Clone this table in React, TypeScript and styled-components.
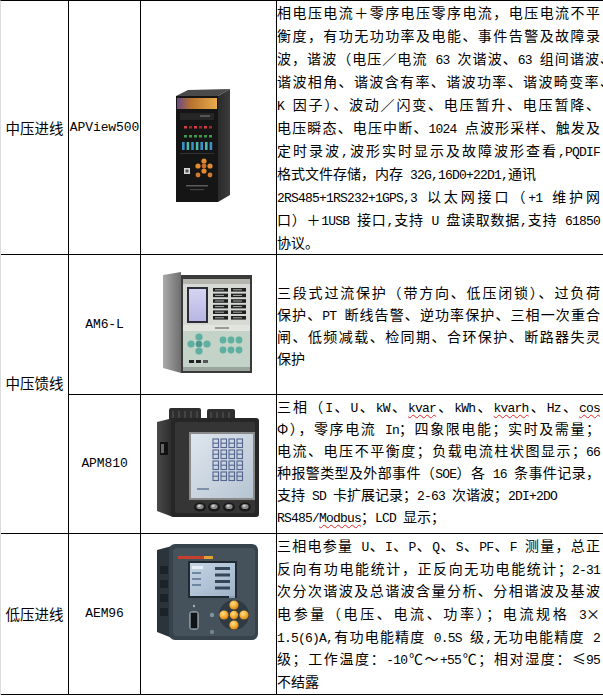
import React from "react";
import styled, { createGlobalStyle } from "styled-components";

const Global = createGlobalStyle`
  html, body { margin: 0; padding: 0; background: #fff; overflow: hidden; }
  body { font-family: "Noto Sans CJK SC", sans-serif; color: #000; }
  #root { width: 603px; height: 697px; overflow: hidden; }
`;

const Sheet = styled.div`
  display: grid;
  grid-template-columns: 68px 72px 136px 330px;
  grid-template-rows: 254px 140px 139px 161px;
  width: 607px;
  border-top: 1px solid #000;
  border-left: 1px solid #dcdcdc;
`;

const Cell = styled.div<{ $row: string; $col: number }>`
  grid-row: ${(p) => p.$row};
  grid-column: ${(p) => p.$col};
  box-sizing: border-box;
  border-right: 1px solid #000;
  border-bottom: 1px solid #000;
  min-width: 0;
  min-height: 0;
`;

const Category = styled(Cell)<{ $lift?: number }>`
  display: flex;
  align-items: center;
  justify-content: center;
  padding-bottom: ${(p) => p.$lift ?? 0}px;
  font-family: "Noto Sans CJK SC", sans-serif;
  font-size: 14.5px;
  line-height: 20px;
  white-space: nowrap;
`;

const Model = styled(Cell)`
  display: flex;
  align-items: center;
  justify-content: center;
  font-family: "Liberation Mono", monospace;
  font-size: 13px;
  letter-spacing: -0.1px;
  line-height: 18px;
  white-space: nowrap;
`;

const Picture = styled(Cell)<{ $pt: number; $pl: number }>`
  display: flex;
  align-items: flex-start;
  justify-content: flex-start;
  padding: ${(p) => p.$pt}px 0 0 ${(p) => p.$pl}px;
  svg { display: block; }
`;

const Desc = styled(Cell)<{ $center?: boolean }>`
  display: flex;
  flex-direction: column;
  justify-content: ${(p) => (p.$center ? "center" : "flex-start")};
  padding: 0 6px 0 0;
  font-family: "Noto Sans CJK SC", sans-serif;
  font-size: 14px;
`;

const Line = styled.div<{ $fill?: boolean; $lh: number }>`
  height: ${(p) => p.$lh}px;
  line-height: ${(p) => p.$lh}px;
  flex: none;
  text-align: justify;
  text-align-last: ${(p) => (p.$fill ? "justify" : "left")};
  text-justify: inter-character;
  white-space: normal;
`;

const Latin = styled.span`
  font-family: "Liberation Mono", monospace;
  font-size: 13px;
  line-height: 1;
  letter-spacing: -0.8px;
`;

const Flag = styled.span`
  text-decoration: underline wavy #e02828;
  text-decoration-thickness: 1px;
  text-underline-offset: 2px;
`;

const Hang = styled.span`
  display: inline-block;
  width: 0;
  line-height: 1;
  white-space: nowrap;
  overflow: visible;
`;

const FLAGGED = /(kvarh|kvar|cos|Modbus)/;

function Rich({ text }: { text: string }) {
  const parts = text.split(/([\x20-\x7E]+)/);
  return (
    <>
      {parts.map((p, i) => {
        if (!p) return null;
        if (/^[\x20-\x7E]+$/.test(p)) {
          const sub = p.split(FLAGGED);
          return (
            <Latin key={i}>
              {sub.map((s, j) =>
                s && FLAGGED.test(s) ? <Flag key={j}>{s}</Flag> : s
              )}
            </Latin>
          );
        }
        return <React.Fragment key={i}>{p}</React.Fragment>;
      })}
    </>
  );
}

type L = { t: string; f?: boolean; h?: string };

function Lines({ lines, lh }: { lines: L[]; lh: number }) {
  return (
    <>
      {lines.map((l, i) => (
        <Line key={i} $fill={l.f} $lh={lh}>
          <Rich text={l.t} />
          {l.h ? <Hang>{l.h}</Hang> : null}
        </Line>
      ))}
    </>
  );
}

const row1: L[] = [
  { t: "相电压电流＋零序电压零序电流，电压电流不平", f: true },
  { t: "衡度，有功无功功率及电能、事件告警及故障录", f: true },
  { t: "波，谐波（电压／电流 63 次谐波、63 组间谐波", f: true, h: "、" },
  { t: "谐波相角、谐波含有率、谐波功率、谐波畸变率", f: true, h: "、" },
  { t: "K 因子）、波动／闪变、电压暂升、电压暂降、", f: true },
  { t: "电压瞬态、电压中断、1024 点波形采样、触发及", f: true },
  { t: "定时录波,波形实时显示及故障波形查看,PQDIF", f: true },
  { t: "格式文件存储，内存 32G,16D0+22D1,通讯" },
  { t: "2RS485+1RS232+1GPS,3 以太网接口（+1 维护网", f: true },
  { t: "口）＋1USB 接口,支持 U 盘读取数据,支持 61850", f: true },
  { t: "协议。" },
];

const row2: L[] = [
  { t: "三段式过流保护（带方向、低压闭锁）、过负荷", f: true },
  { t: "保护、PT 断线告警、逆功率保护、三相一次重合", f: true },
  { t: "闸、低频减载、检同期、合环保护、断路器失灵", f: true },
  { t: "保护" },
];

const row3: L[] = [
  { t: "三相（I、U、kW、kvar、kWh、kvarh、Hz、cos", f: true },
  { t: "Φ），零序电流 In；四象限电能；实时及需量；", f: true },
  { t: "电流、电压不平衡度；负载电流柱状图显示；66", f: true },
  { t: "种报警类型及外部事件（SOE）各 16 条事件记录，", f: true },
  { t: "支持 SD 卡扩展记录；2-63 次谐波；2DI+2DO" },
  { t: "RS485/Modbus；LCD 显示；" },
];

const row4: L[] = [
  { t: "三相电参量 U、I、P、Q、S、PF、F 测量，总正", f: true },
  { t: "反向有功电能统计，正反向无功电能统计；2-31", f: true },
  { t: "次分次谐波及总谐波含量分析、分相谐波及基波", f: true },
  { t: "电参量（电压、电流、功率）；电流规格 3×", f: true },
  { t: "1.5(6)A,有功电能精度 0.5S 级,无功电能精度 2", f: true },
  { t: "级；工作温度：-10℃～+55℃；相对湿度：≤95", f: true },
  { t: "不结露" },
];

const ApviewDevice = () => (
  <svg width="54" height="113" viewBox="0 0 54 113">
    <defs>
      <linearGradient id="apvBand" x1="0" y1="0" x2="1" y2="0">
        <stop offset="0" stopColor="#6a4a86" />
        <stop offset="0.35" stopColor="#b8732e" />
        <stop offset="1" stopColor="#e9ac4c" />
      </linearGradient>
      <linearGradient id="apvSide" x1="0" y1="0" x2="1" y2="0">
        <stop offset="0" stopColor="#2a2a2a" />
        <stop offset="1" stopColor="#3c3c3c" />
      </linearGradient>
    </defs>
    <polygon points="42,7 54,0 54,106 42,113" fill="url(#apvSide)" />
    <polygon points="0,7 12,1 54,0 42,7" fill="#4a4a4a" />
    <rect x="0" y="7" width="42" height="106" fill="#151515" />
    <rect x="1" y="9" width="40" height="11" fill="url(#apvBand)" />
    <rect x="4" y="24" width="34" height="7" fill="#262626" />
    <rect x="24" y="26" width="10" height="2" fill="#555" />
    {[0, 1, 2, 3, 4, 5].map((i) => (
      <rect key={"r" + i} x={8 + i * 5} y={37} width="3" height="2.5" fill={i % 2 ? "#a02828" : "#d04040"} />
    ))}
    {[0, 1, 2, 3, 4, 5].map((i) => (
      <rect key={"g" + i} x={8 + i * 5} y={46} width="3" height="2.5" fill="#3f9a4c" />
    ))}
    {[0, 1, 2, 3, 4, 5, 6].map((i) => (
      <rect key={"c" + i} x={6 + i * 4.6} y={53} width="2.6" height="8" fill={i % 2 ? "#4fb8a8" : "#3a90c8"} />
    ))}
    <rect x="4" y="64" width="34" height="1" fill="#333" />
    <circle cx="28" cy="72" r="2.6" fill="#e48a32" />
    <circle cx="22" cy="77" r="2.6" fill="#e48a32" />
    <circle cx="34" cy="77" r="2.6" fill="#e48a32" />
    <circle cx="28" cy="77" r="2.4" fill="#c8702a" />
    <circle cx="28" cy="82" r="2.6" fill="#e48a32" />
    <circle cx="22" cy="86" r="2.4" fill="#d07a2e" />
    <circle cx="34" cy="86" r="2.4" fill="#d07a2e" />
    <rect x="8" y="79" width="6" height="6" fill="#d8d8d8" />
    <rect x="9.5" y="80.5" width="3" height="3" fill="#555" />
    <rect x="10" y="96" width="22" height="1.5" fill="#5a5a5a" />
    <rect x="14" y="100" width="14" height="1.2" fill="#444" />
  </svg>
);

const Am6Device = () => (
  <svg width="89" height="101" viewBox="0 0 89 101">
    <defs>
      <linearGradient id="amSide" x1="0" y1="0" x2="1" y2="0">
        <stop offset="0" stopColor="#a9a9a9" />
        <stop offset="1" stopColor="#6e6e6e" />
      </linearGradient>
      <linearGradient id="amLcd" x1="0" y1="0" x2="0" y2="1">
        <stop offset="0" stopColor="#d6d4f2" />
        <stop offset="1" stopColor="#b8b6e4" />
      </linearGradient>
    </defs>
    <polygon points="0,3 18,0 18,101 0,96" fill="url(#amSide)" />
    <rect x="18" y="3" width="71" height="98" fill="#3a3a3a" />
    <rect x="20" y="7" width="67" height="92" fill="#d6d9d4" />
    <rect x="20" y="7" width="67" height="5" fill="#b4b6ae" />
    <rect x="24" y="15" width="21" height="36" fill="#2c2c36" />
    <rect x="26" y="17" width="17" height="32" fill="url(#amLcd)" />
    {[0, 1, 2, 3, 4, 5].map((i) => (
      <g key={i}>
        <rect x="50" y={16 + i * 5.6} width="15" height="3.6" fill="#202020" />
        <rect x="68" y={16 + i * 5.6} width="15" height="3.6" fill="#202020" />
        <rect x="52" y={17.3 + i * 5.6} width="9" height="1" fill="#aaa" />
        <rect x="70" y={17.3 + i * 5.6} width="9" height="1" fill="#aaa" />
      </g>
    ))}
    <rect x="20" y="53" width="67" height="6" fill="#e2e4de" />
    <rect x="52" y="55" width="14" height="2" fill="#999" />
    <rect x="20" y="59" width="67" height="40" fill="#c3d3c7" />
    <circle cx="36" cy="65" r="3.6" fill="#5db0a2" />
    <circle cx="28" cy="72" r="3.6" fill="#5db0a2" />
    <circle cx="44" cy="72" r="3.6" fill="#5db0a2" />
    <circle cx="36" cy="72" r="3.3" fill="#4a9c8f" />
    <circle cx="36" cy="79" r="3.6" fill="#5db0a2" />
    {[0, 1, 2].map((i) => (
      <g key={i}>
        <circle cx={60 + i * 8} cy="68" r="3.4" fill="#5db0a2" />
        <circle cx={60 + i * 8} cy="78" r="3.4" fill="#5db0a2" />
      </g>
    ))}
    <rect x="26" y="88" width="5" height="3" fill="#222" />
    <rect x="33" y="88" width="5" height="3" fill="#222" />
    <rect x="40" y="88" width="5" height="3" fill="#555" />
    <rect x="20" y="95" width="67" height="4" fill="#9aa69d" />
  </svg>
);

const DIGIT_ROWS = [0, 1, 2, 3];
const DIGIT_COLS = [0, 1, 2, 3];

const Apm810Device = () => (
  <svg width="102" height="109" viewBox="0 0 102 109">
    <defs>
      <linearGradient id="apmLcd" x1="0" y1="0" x2="1" y2="1">
        <stop offset="0" stopColor="#dfe6ee" />
        <stop offset="1" stopColor="#b6c4d2" />
      </linearGradient>
      <linearGradient id="apmSide" x1="0" y1="0" x2="1" y2="0">
        <stop offset="0" stopColor="#4a4a4a" />
        <stop offset="1" stopColor="#2a2a2a" />
      </linearGradient>
    </defs>
    <rect x="12" y="0" width="32" height="13" rx="2" fill="#2e2e2e" />
    <rect x="50" y="1" width="28" height="12" rx="2" fill="#2e2e2e" />
    {[0, 1, 2, 3, 4].map((i) => (
      <rect key={i} x={15 + i * 6} y="3" width="2" height="8" fill="#444" />
    ))}
    {[0, 1, 2, 3].map((i) => (
      <rect key={i} x={53 + i * 6} y="4" width="2" height="7" fill="#444" />
    ))}
    <polygon points="0,14 16,10 16,109 0,103" fill="url(#apmSide)" />
    <rect x="3" y="34" width="8" height="13" fill="#111" />
    <rect x="4" y="36" width="3" height="9" fill="#666" />
    <rect x="14" y="10" width="88" height="99" rx="3" fill="#262626" />
    <rect x="18" y="14" width="80" height="91" rx="2" fill="#353535" />
    <rect x="32" y="24" width="66" height="68" fill="#8a8a8a" />
    <rect x="34" y="26" width="62" height="64" fill="url(#apmLcd)" />
    {DIGIT_ROWS.map((r) =>
      DIGIT_COLS.map((c) => (
        <g key={r + "-" + c} fill="none" stroke="#55648e" strokeWidth="1.1">
          <rect x={56 + c * 8} y={31 + r * 11} width="5.5" height="8.5" />
          <line x1={56 + c * 8} y1={35.2 + r * 11} x2={61.5 + c * 8} y2={35.2 + r * 11} />
        </g>
      ))
    )}
    <rect x="40" y="80" width="12" height="2" fill="#8090a8" />
    {[43, 57, 72, 88].map((x) => (
      <g key={x}>
        <ellipse cx={x} cy="99" rx="6" ry="4.6" fill="#1a1a1a" />
        <ellipse cx={x} cy="98.5" rx="3.6" ry="2.6" fill="#8c8c8c" />
        <ellipse cx={x - 0.8} cy="97.8" rx="1.6" ry="1.1" fill="#d0d0d0" />
      </g>
    ))}
  </svg>
);

const Aem96Device = () => (
  <svg width="101" height="96" viewBox="0 0 101 96">
    <defs>
      <linearGradient id="aemLcd" x1="0" y1="0" x2="1" y2="1">
        <stop offset="0" stopColor="#c4d4e4" />
        <stop offset="1" stopColor="#9fb3c8" />
      </linearGradient>
      <radialGradient id="aemBtn" cx="0.4" cy="0.35" r="0.7">
        <stop offset="0" stopColor="#ffe08a" />
        <stop offset="0.6" stopColor="#f4a92c" />
        <stop offset="1" stopColor="#c77818" />
      </radialGradient>
    </defs>
    <polygon points="0,6 15,2 15,94 0,88" fill="#2b343b" />
    {[0, 1, 2, 3].map((i) => (
      <rect key={i} x="3" y={22 + i * 14} width="8" height="8" fill="#1c2328" />
    ))}
    <rect x="12" y="0" width="89" height="96" rx="6" fill="#37434c" />
    <rect x="16" y="4" width="82" height="88" rx="4" fill="#45525c" />
    <rect x="21" y="12" width="26" height="3" fill="#c4402c" />
    <rect x="47" y="12" width="9" height="3" fill="#e0a234" />
    <rect x="31" y="17" width="49" height="37" fill="#1f2a32" />
    <rect x="33" y="19" width="45" height="33" fill="url(#aemLcd)" />
    <rect x="35" y="22" width="11" height="3" fill="#e6eef6" />
    <rect x="35" y="28" width="9" height="2" fill="#6e86a0" />
    <rect x="35" y="34" width="9" height="2" fill="#6e86a0" />
    <rect x="35" y="40" width="9" height="2" fill="#6e86a0" />
    {[0, 1, 2, 3].map((i) => (
      <rect key={i} x="58" y={23 + i * 6.5} width="15" height="3" fill="#34465a" />
    ))}
    <rect x="72" y="52" width="6" height="2" fill="#8aa0b8" />
    <rect x="33" y="68" width="8" height="17" rx="1.5" fill="#0f1418" stroke="#c8d0d6" strokeWidth="1" />
    <circle cx="37" cy="62" r="1.2" fill="#9ab0c0" />
    <circle cx="55" cy="71" r="2.2" fill="#7f95a6" />
    <circle cx="55" cy="88" r="2.2" fill="#6e8595" />
    <circle cx="77" cy="71" r="15" fill="#2f3a43" />
    <circle cx="77" cy="61" r="4.6" fill="url(#aemBtn)" />
    <circle cx="77" cy="81" r="4.6" fill="url(#aemBtn)" />
    <circle cx="67" cy="71" r="4.6" fill="url(#aemBtn)" />
    <circle cx="87" cy="71" r="4.6" fill="url(#aemBtn)" />
    <circle cx="77" cy="71" r="4.2" fill="url(#aemBtn)" />
  </svg>
);

export default function App() {
  return (
    <>
      <Global />
      <Sheet>
        <Category $row="1" $col={1}>中压进线</Category>
        <Model $row="1" $col={2}>APView500</Model>
        <Picture $row="1" $col={3} $pt={88} $pl={35}>
          <ApviewDevice />
        </Picture>
        <Desc $row="1" $col={4}>
          <Lines lines={row1} lh={23} />
        </Desc>

        <Category $row="2 / span 2" $col={1} $lift={22}>中压馈线</Category>
        <Model $row="2" $col={2}>AM6-L</Model>
        <Picture $row="2" $col={3} $pt={17} $pl={22}>
          <Am6Device />
        </Picture>
        <Desc $row="2" $col={4} $center>
          <Lines lines={row2} lh={22} />
        </Desc>

        <Model $row="3" $col={2}>APM810</Model>
        <Picture $row="3" $col={3} $pt={13} $pl={16}>
          <Apm810Device />
        </Picture>
        <Desc $row="3" $col={4}>
          <Lines lines={row3} lh={22} />
        </Desc>

        <Category $row="4" $col={1}>低压进线</Category>
        <Model $row="4" $col={2}>AEM96</Model>
        <Picture $row="4" $col={3} $pt={10} $pl={16}>
          <Aem96Device />
        </Picture>
        <Desc $row="4" $col={4}>
          <Lines lines={row4} lh={22.7} />
        </Desc>
      </Sheet>
    </>
  );
}
